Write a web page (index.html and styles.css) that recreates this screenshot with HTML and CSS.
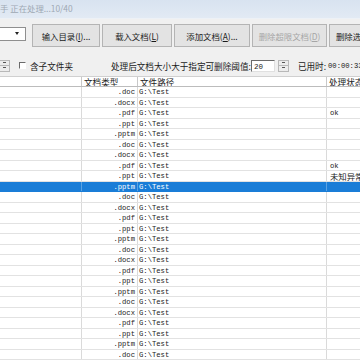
FILE: index.html
```html
<!DOCTYPE html>
<html>
<head>
<meta charset="utf-8">
<link rel="stylesheet" href="styles.css">
</head>
<body>
<div class="app">
  <div class="titlebar">手 正在处理...10/40</div>
  <div class="toolbar">
    <div class="combo"><span class="arrow"></span></div>
    <button class="btn b1">输入目录(<u>I</u>)...</button>
    <button class="btn b2">载入文档(<u>L</u>)</button>
    <button class="btn b3">添加文档(<u>A</u>)...</button>
    <button class="btn b4" disabled>删除超限文档(<u>D</u>)</button>
    <button class="btn b5">删除选...</button>
  </div>
  <div class="options">
    <div class="updown small"><span class="up"></span><span class="down"></span></div>
    <span class="check"></span>
    <span class="label">含子文件夹</span>
    <span class="label thresh">处理后文档大小大于指定可删除阈值:</span>
    <span class="num">20</span>
    <div class="updown"><span class="up"></span><span class="down"></span></div>
    <span class="label elapsed">已用时:</span>
    <span class="time">00:00:33</span>
  </div>
  <div class="table">
    <div class="row head">
      <div class="c c0"></div>
      <div class="c c1">文档类型</div>
      <div class="c c2">文件路径</div>
      <div class="c c3">处理状态</div>
    </div>
    <div class="row"><div class="c c0"></div><div class="c c1">.doc</div><div class="c c2">G:\Test</div><div class="c c3"></div></div>
    <div class="row"><div class="c c0"></div><div class="c c1">.docx</div><div class="c c2">G:\Test</div><div class="c c3"></div></div>
    <div class="row"><div class="c c0"></div><div class="c c1">.pdf</div><div class="c c2">G:\Test</div><div class="c c3 ok">ok</div></div>
    <div class="row"><div class="c c0"></div><div class="c c1">.ppt</div><div class="c c2">G:\Test</div><div class="c c3"></div></div>
    <div class="row"><div class="c c0"></div><div class="c c1">.pptm</div><div class="c c2">G:\Test</div><div class="c c3"></div></div>
    <div class="row"><div class="c c0"></div><div class="c c1">.doc</div><div class="c c2">G:\Test</div><div class="c c3"></div></div>
    <div class="row"><div class="c c0"></div><div class="c c1">.docx</div><div class="c c2">G:\Test</div><div class="c c3"></div></div>
    <div class="row"><div class="c c0"></div><div class="c c1">.pdf</div><div class="c c2">G:\Test</div><div class="c c3 ok">ok</div></div>
    <div class="row"><div class="c c0"></div><div class="c c1">.ppt</div><div class="c c2">G:\Test</div><div class="c c3 err">未知异常</div></div>
    <div class="row sel"><div class="c c0"></div><div class="c c1">.pptm</div><div class="c c2">G:\Test</div><div class="c c3"></div></div>
    <div class="row"><div class="c c0"></div><div class="c c1">.doc</div><div class="c c2">G:\Test</div><div class="c c3"></div></div>
    <div class="row"><div class="c c0"></div><div class="c c1">.docx</div><div class="c c2">G:\Test</div><div class="c c3"></div></div>
    <div class="row"><div class="c c0"></div><div class="c c1">.pdf</div><div class="c c2">G:\Test</div><div class="c c3"></div></div>
    <div class="row"><div class="c c0"></div><div class="c c1">.ppt</div><div class="c c2">G:\Test</div><div class="c c3"></div></div>
    <div class="row"><div class="c c0"></div><div class="c c1">.pptm</div><div class="c c2">G:\Test</div><div class="c c3"></div></div>
    <div class="row"><div class="c c0"></div><div class="c c1">.doc</div><div class="c c2">G:\Test</div><div class="c c3"></div></div>
    <div class="row"><div class="c c0"></div><div class="c c1">.docx</div><div class="c c2">G:\Test</div><div class="c c3"></div></div>
    <div class="row"><div class="c c0"></div><div class="c c1">.pdf</div><div class="c c2">G:\Test</div><div class="c c3"></div></div>
    <div class="row"><div class="c c0"></div><div class="c c1">.ppt</div><div class="c c2">G:\Test</div><div class="c c3"></div></div>
    <div class="row"><div class="c c0"></div><div class="c c1">.pptm</div><div class="c c2">G:\Test</div><div class="c c3"></div></div>
    <div class="row"><div class="c c0"></div><div class="c c1">.doc</div><div class="c c2">G:\Test</div><div class="c c3"></div></div>
    <div class="row"><div class="c c0"></div><div class="c c1">.docx</div><div class="c c2">G:\Test</div><div class="c c3"></div></div>
    <div class="row"><div class="c c0"></div><div class="c c1">.pdf</div><div class="c c2">G:\Test</div><div class="c c3"></div></div>
    <div class="row"><div class="c c0"></div><div class="c c1">.ppt</div><div class="c c2">G:\Test</div><div class="c c3"></div></div>
    <div class="row"><div class="c c0"></div><div class="c c1">.pptm</div><div class="c c2">G:\Test</div><div class="c c3"></div></div>
    <div class="row"><div class="c c0"></div><div class="c c1">.doc</div><div class="c c2">G:\Test</div><div class="c c3"></div></div>
  </div>
</div>
</body>
</html>
```

FILE: styles.css
```css
html, body {
  margin: 0;
  padding: 0;
}
body {
  width: 360px;
  height: 360px;
  overflow: hidden;
  background: #f0f0f0;
  font-family: "Noto Sans CJK SC", "Noto Sans", sans-serif;
  font-size: 8.6px;
  color: #1a1a1a;
}
.app {
  width: 430px;
}
.titlebar {
  height: 18px;
  line-height: 17px;
  background: linear-gradient(#d8e3f0, #e2eaf4);
  border-bottom: 1px solid #edf1f6;
  color: #9ea8b3;
  font-size: 8.4px;
  white-space: nowrap;
}
.toolbar {
  display: flex;
  align-items: flex-start;
  height: 36px;
  box-sizing: border-box;
  padding-top: 5px;
}
.combo {
  position: relative;
  width: 28px;
  height: 14px;
  margin-top: 3px;
  margin-left: -2px;
  margin-right: 6px;
  box-sizing: border-box;
  background: #fff;
  border: 1px solid #8f8f8f;
}
.combo .arrow {
  position: absolute;
  left: 16px;
  top: 4px;
  width: 0;
  height: 0;
  border-left: 2.5px solid transparent;
  border-right: 2.5px solid transparent;
  border-top: 3px solid #222;
}
.btn {
  height: 23px;
  margin: 0 2px 0 0;
  padding: 0;
  box-sizing: border-box;
  background: #e3e3e3;
  border: 1px solid #b4b4b4;
  font-family: "Noto Sans CJK SC", sans-serif;
  font-size: 8.4px;
  color: #1a1a1a;
  white-space: nowrap;
  text-align: center;
}
.btn u {
  text-decoration: underline;
}
.b1 { width: 68px; }
.b2 { width: 70px; }
.b3 { width: 76px; }
.b4 { width: 75px; color: #a6a6a6; }
.b5 { width: 80px; text-align: left; padding-left: 6px; }
.options {
  display: flex;
  align-items: center;
  height: 21px;
  box-sizing: border-box;
  padding-bottom: 0;
  white-space: nowrap;
}
.updown {
  display: flex;
  flex-direction: column;
  width: 11px;
  height: 12px;
  box-sizing: border-box;
  border: 1px solid #b8b8b8;
  background: #ececec;
}
.updown span {
  flex: 1;
  position: relative;
}
.updown .up {
  border-bottom: 1px solid #b8b8b8;
}
.updown .up::after,
.updown .down::after {
  content: "";
  position: absolute;
  left: 3px;
  top: 1px;
  width: 3px;
  height: 1px;
  background: #555;
}
.updown.small {
  margin-left: -1px;
  width: 11px;
}
.check {
  width: 7px;
  height: 7px;
  margin-left: 9px;
  box-sizing: border-box;
  border-top: 1px solid #6a6a6a;
  border-left: 1px solid #6a6a6a;
  border-right: 1px solid #fff;
  border-bottom: 1px solid #fff;
  background: #fff;
}
.label {
  margin-left: 4px;
}
.thresh {
  margin-left: 38px;
}
.num {
  width: 24px;
  height: 12px;
  line-height: 12px;
  margin-left: 0;
  box-sizing: border-box;
  padding-left: 2px;
  background: #fff;
  border-top: 1px solid #6a6a6a;
  border-left: 1px solid #6a6a6a;
  border-right: 1px solid #e0e0e0;
  border-bottom: 1px solid #e0e0e0;
  font-family: "Liberation Mono", monospace;
  font-size: 7.5px;
}
.num + .updown {
  margin-left: 3px;
}
.elapsed {
  margin-left: 9px;
}
.time {
  margin-left: 2px;
  font-family: "Liberation Mono", monospace;
  font-size: 7.2px;
}
.table {
  background: #fff;
}
.row {
  display: grid;
  grid-template-columns: 82px 56px 189px 100px;
  height: 10.5px;
  box-sizing: border-box;
  border-bottom: 1px solid #e2e2e2;
  font-family: "Liberation Mono", monospace;
  font-size: 7.2px;
  line-height: 10px;
  color: #222;
  white-space: nowrap;
}
.row .c {
  border-right: 1px solid #dadada;
  overflow: hidden;
}
.row .c1 {
  text-align: right;
  padding-right: 2px;
}
.row .c2 {
  padding-left: 1px;
}
.row .c3 {
  padding-left: 3px;
  border-right: none;
}
.row .err {
  font-family: "Noto Sans CJK SC", sans-serif;
  font-size: 8.4px;
  line-height: 10px;
}
.row.head {
  height: 11px;
  border-top: 1px solid #d0d0d0;
  border-bottom: 1px solid #bcbcbc;
  font-family: "Noto Sans CJK SC", sans-serif;
  font-size: 8.6px;
  line-height: 10px;
}
.row.head .c {
  border-right: 1px solid #c8c8c8;
  text-align: left;
  padding: 0 0 0 2px;
}
.row.sel {
  background: #1a7dd7;
  color: #fff;
  border-bottom-color: #1a7dd7;
}
.row.sel .c {
  border-right-color: #5aa2e3;
}
```
